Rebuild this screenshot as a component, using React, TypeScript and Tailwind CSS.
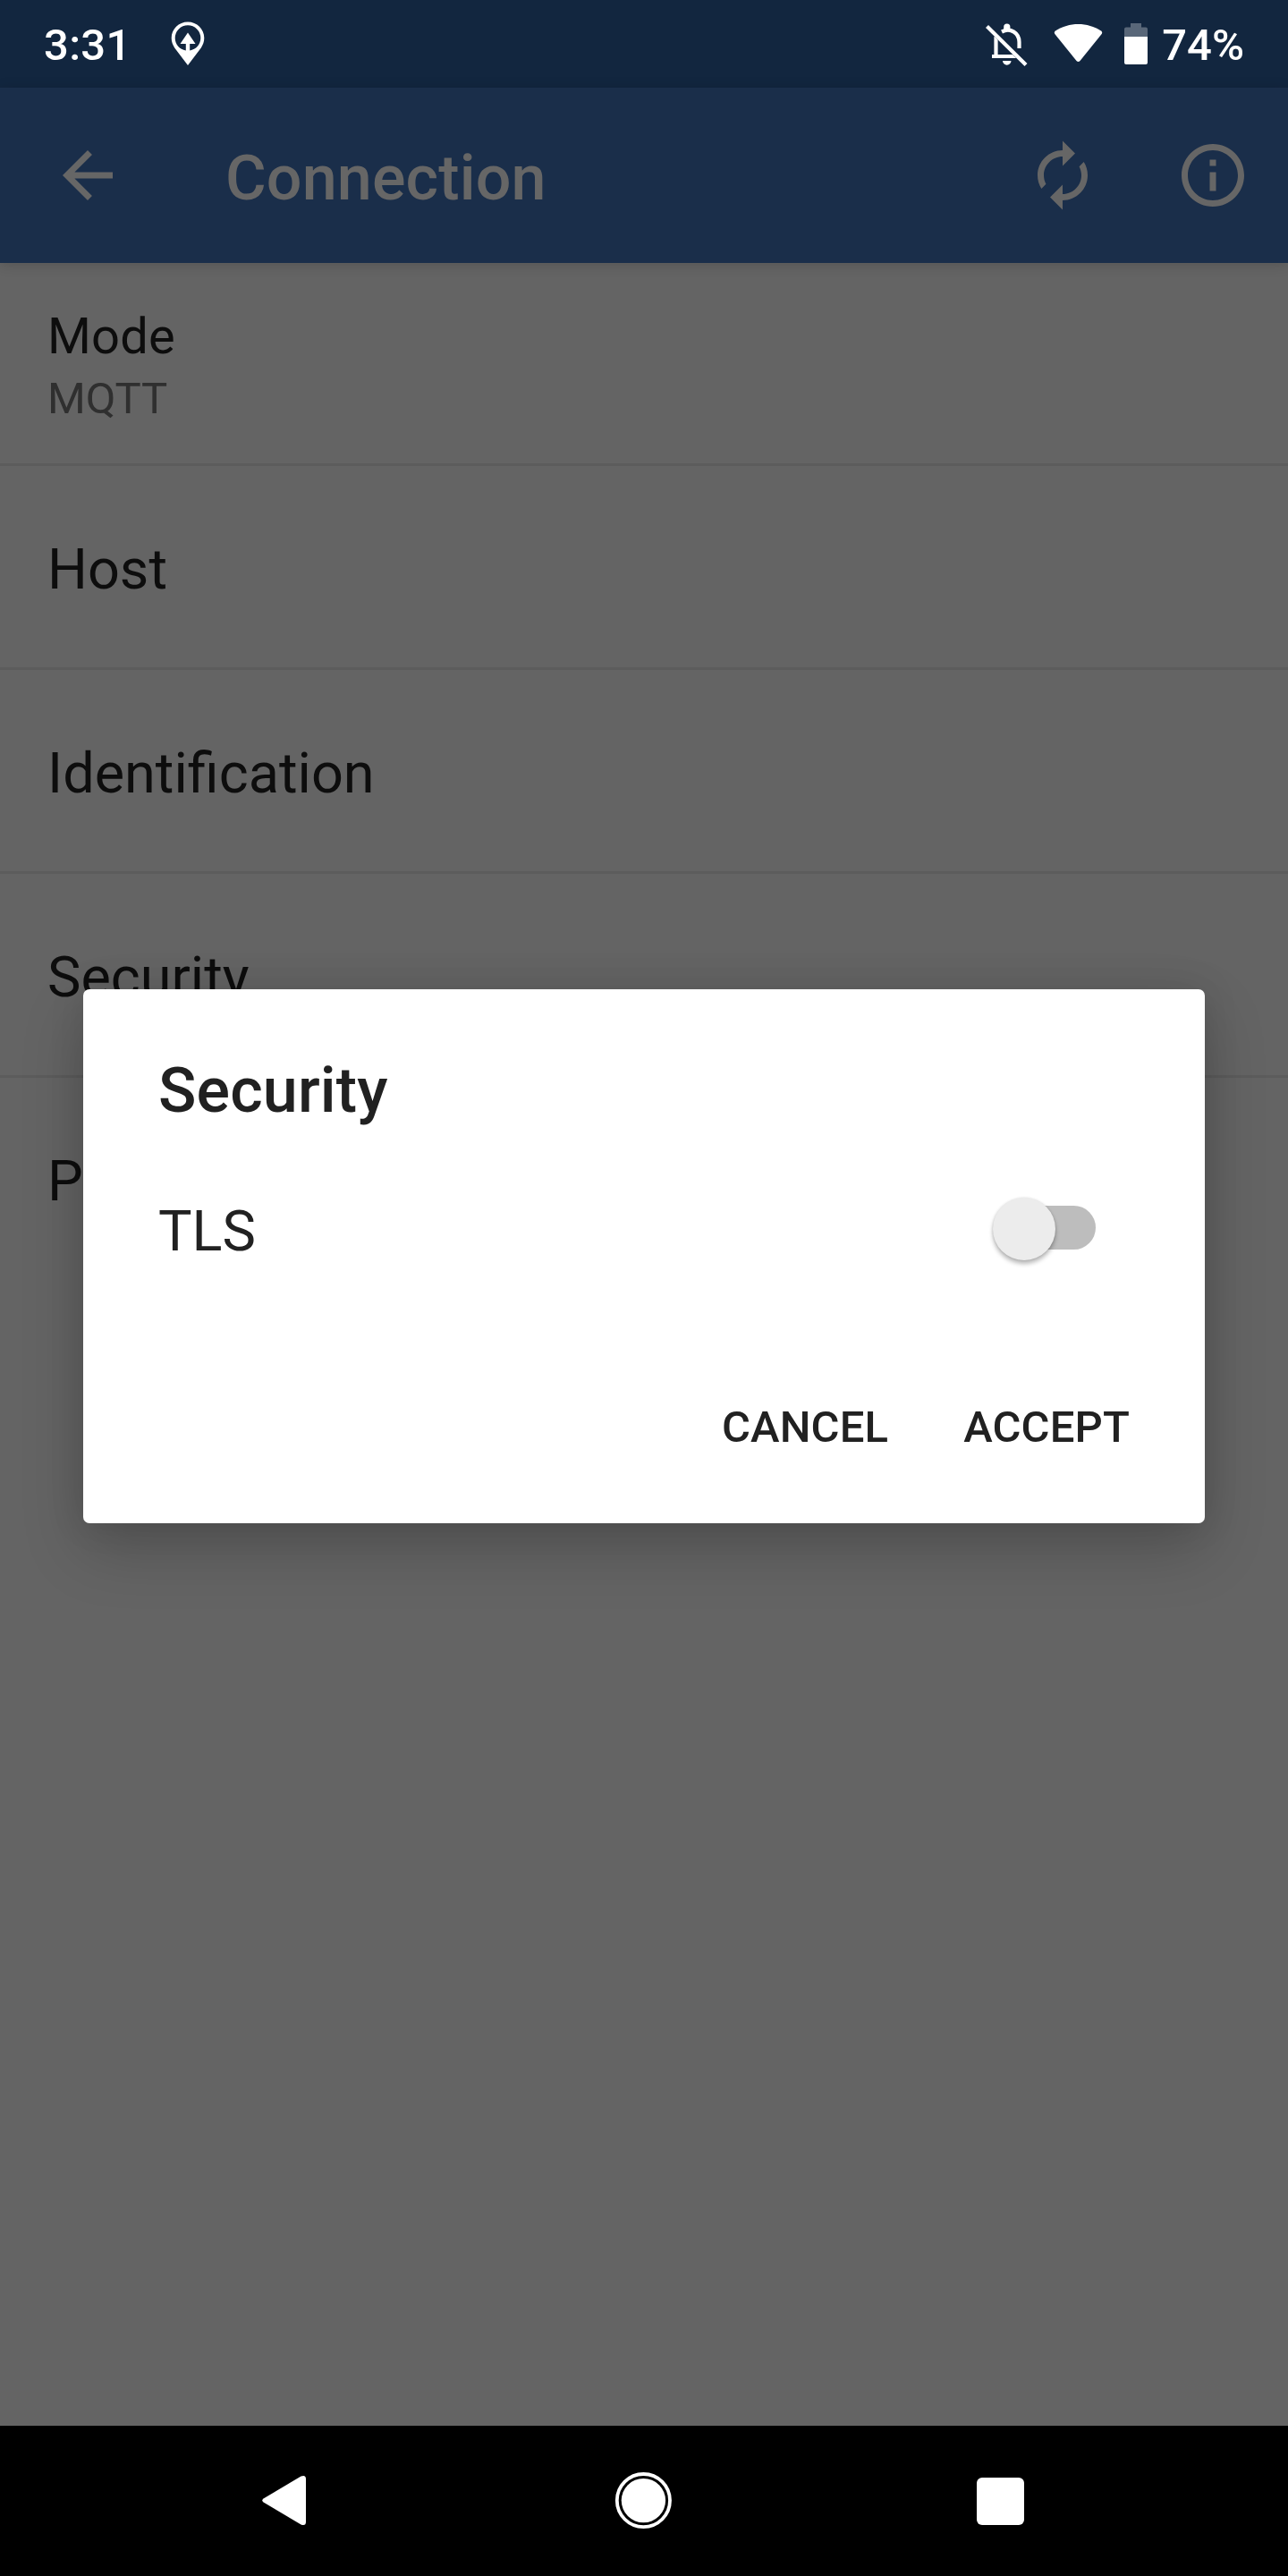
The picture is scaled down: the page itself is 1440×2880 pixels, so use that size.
import React from "react";

const rows = ["Host", "Identification", "Security", "Parameters"];

function StatusBar() {
  return (
    <header className="flex h-[98px] items-center justify-between bg-[#12263f] pr-[49px] pl-[49px] text-white">
      <div className="flex items-center">
        <span className="text-[49px] leading-[58px] font-medium pt-[3px] tracking-[0.3px]">3:31</span>
        <svg className="ml-[44px] h-[50px] w-[38px]" viewBox="0 0 38 50" fill="none">
          <path
            fillRule="evenodd"
            fill="#fff"
            d="M19 0.5C8.8 0.5 0.7 8.500 0.700 18.500C0.700 22.500 2 26 4.200 29.500L19 49L33.800 29.500C36 26 37.300 22.500 37.300 18.500C37.300 8.500 29.200 0.500 19 0.500ZM16.800 32.500C9.800 31.400 4.700 25.600 4.700 18.500A14.300 14.300 0 0 1 33.300 18.500C33.300 25.600 28.200 31.400 21.200 32.500V25H27.500L19 12.500L10.500 25H16.800Z"
          />
        </svg>
      </div>
      <div className="flex items-center">
        <svg className="h-[49px] w-[49px] -translate-x-px" viewBox="0 0 49 49" fill="none">
          <path d="M12.500 16V38M8 38H35" stroke="#fff" strokeWidth="4.200" />
          <path d="M19 10.500C29 5.500 38.500 12 38.500 22V29" stroke="#fff" strokeWidth="4.200" />
          <path d="M21.200 8V5a3.600 3.600 0 0 1 7.200 0V8ZM20 43H29.500a4.700 4.700 0 0 1-9.500 0Z" fill="#fff" />
          <path d="M4 6L46 48" stroke="#12263f" strokeWidth="4" />
          <path d="M2.500 4.500L46 47.500" stroke="#fff" strokeWidth="4.200" />
        </svg>
        <svg className="ml-[28px] h-[44px] w-[55px] -translate-x-px -translate-y-px" viewBox="0 0 55 44" fill="#fff">
          <path d="M2 8.500C17 -1.500 38 -1.500 53 8.500Q55 10 53.700 12L29.500 42Q27.500 44 25.500 42L1.300 12Q0 10 2 8.500Z" />
        </svg>
        <svg className="ml-[24px] h-[46px] w-[26px] -translate-x-px" viewBox="0 0 26 46" fill="#fff">
          <path opacity=".3" d="M7 0H19V4.500H24Q26 4.500 26 6.500V15H0V6.500Q0 4.500 2 4.500H7Z" />
          <path d="M0 15H26V44Q26 46 24 46H2Q0 46 0 44Z" />
        </svg>
        <span className="ml-[15px] pt-[3px] text-[49px] leading-[58px] font-medium">74%</span>
      </div>
    </header>
  );
}

function AppBar() {
  return (
    <div className="relative flex h-[196px] items-center bg-[#1a2e4a] text-[#666] shadow-[0_2px_14px_rgba(0,0,0,0.16)]">
      <svg className="ml-[56px] h-[84px] w-[84px]" viewBox="0 0 24 24" fill="currentColor">
        <path d="M20 11H7.830l5.590-5.590L12 4l-8 8 8 8 1.410-1.410L7.830 13H20v-2z" />
      </svg>
      <h1 className="ml-[112px] flex-1 pt-[6px] text-[70px] leading-[82px] font-medium tracking-[0.15px]">Connection</h1>
      <svg className="mr-[84px] h-[84px] w-[84px]" viewBox="0 0 24 24" fill="currentColor">
        <path d="M12 6v3l4-4-4-4v3c-4.420 0-8 3.580-8 8 0 1.570.460 3.030 1.240 4.260L6.700 14.800c-.450-.830-.700-1.790-.700-2.800 0-3.310 2.690-6 6-6zm6.760 1.740L17.300 9.200c.440.840.700 1.790.700 2.800 0 3.310-2.690 6-6 6v-3l-4 4 4 4v-3c4.420 0 8-3.580 8-8 0-1.570-.460-3.030-1.240-4.260z" />
      </svg>
      <svg className="mr-[42px] h-[84px] w-[84px]" viewBox="0 0 24 24" fill="currentColor">
        <path d="M11 7h2v2h-2zm0 4h2v6h-2zm1-9C6.480 2 2 6.480 2 12s4.480 10 10 10 10-4.480 10-10S17.520 2 12 2zm0 18c-4.410 0-8-3.590-8-8s3.590-8 8-8 8 3.590 8 8-3.590 8-8 8z" />
      </svg>
    </div>
  );
}

function Switch() {
  return (
    <span className="relative flex h-[70px] w-[116px] items-center">
      <span className="ml-[4px] h-[49px] w-[112px] -translate-y-[2px] rounded-full bg-[#bdbdbd]" />
      <span className="absolute top-0 left-px size-[70px] rounded-full bg-[#ececec] shadow-[0_4px_5px_rgba(0,0,0,0.28),0_0_3px_rgba(0,0,0,0.12)]" />
    </span>
  );
}

function SecurityDialog() {
  return (
    <section
      role="dialog"
      className="absolute top-[1106px] left-[93px] flex h-[597px] w-[1254px] flex-col rounded-[7px] bg-white pt-[72px] pr-[84px] pl-[84px] text-[#212121] shadow-[0_28px_70px_rgba(0,0,0,0.2),0_0_40px_rgba(0,0,0,0.1)]"
    >
      <h2 className="text-[70px] leading-[82px] font-medium tracking-[0.15px]">Security</h2>
      <div className="mt-[73px] flex h-[82px] items-center justify-between pr-[38px]">
        <span className="pt-[6px] text-[63px] leading-[74px]">TLS</span>
        <Switch />
      </div>
      <div className="mt-[152px] flex justify-end gap-[84px] text-[49px] leading-[58px] font-medium tracking-[0.15px]">
        <button>CANCEL</button>
        <button>ACCEPT</button>
      </div>
    </section>
  );
}

function NavBar() {
  return (
    <nav className="flex h-[168px] items-center bg-black">
      <svg className="ml-[293px] h-[58px] w-[50px]" viewBox="0 0 50 58" fill="#fff">
        <path d="M1.500 26.500L43.500 1.500Q49 -0.500 49 4.500V52.500Q49 57.500 43.500 55.500L1.500 30.500Q-1 28.500 1.500 26.500Z" />
      </svg>
      <svg className="ml-[344px] h-[64px] w-[64px]" viewBox="0 0 64 64" fill="none">
        <circle cx="32.400" cy="31.600" r="29.600" stroke="#fff" strokeWidth="3.800" />
        <circle cx="32.400" cy="31.600" r="24.700" fill="#fff" />
      </svg>
      <span className="ml-[341px] size-[53px] rounded-[6px] bg-white" />
    </nav>
  );
}

export default function App() {
  return (
    <div className="relative flex h-[2880px] w-[1440px] flex-col overflow-hidden bg-[#646464] font-[Roboto,sans-serif]">
      <StatusBar />
      <AppBar />
      <main className="flex-1 text-[#0d0d0d]">
        <div className="h-[227px] border-b-[3px] border-[#5c5c5c] pt-[49px] pl-[53px]">
          <div className="text-[56px] leading-[66px] tracking-[0.2px]">Mode</div>
          <div className="mt-[8px] text-[49px] leading-[58px] text-[#2f2f2f]">MQTT</div>
        </div>
        {rows.map((row) => (
          <div
            key={row}
            className="flex h-[228px] items-center border-b-[3px] border-[#5c5c5c] pt-[6px] pl-[53px] text-[63px] leading-[74px] last:border-transparent"
          >
            {row}
          </div>
        ))}
      </main>
      <NavBar />
      <SecurityDialog />
    </div>
  );
}
